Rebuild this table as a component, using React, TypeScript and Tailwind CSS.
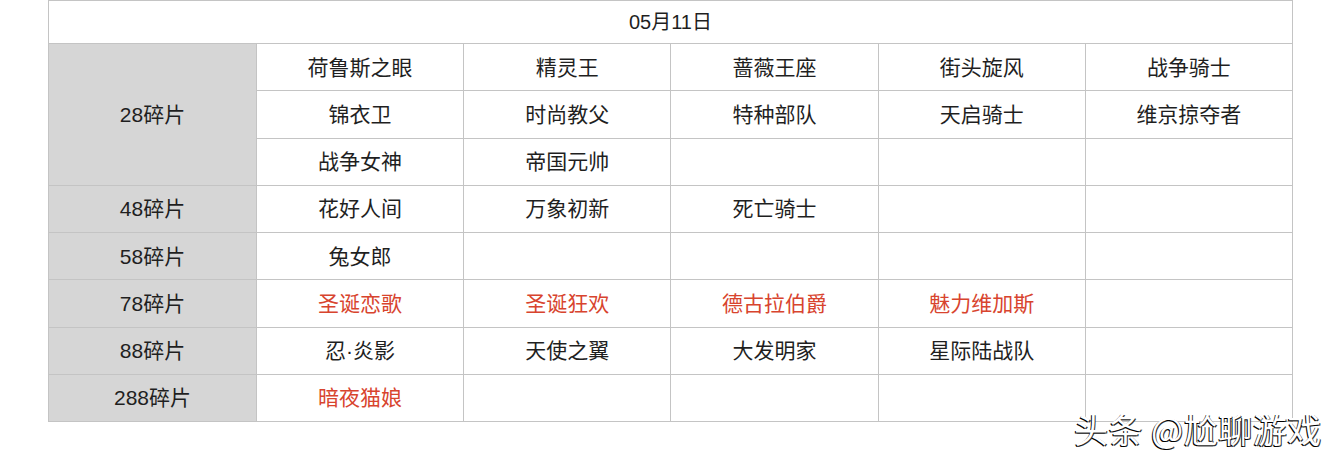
const cols = ['荷鲁斯之眼', '精灵王', '蔷薇王座', '街头旋风', '战争骑士'];

type Row = { label?: string; span?: number; items: string[]; red?: boolean };

const rows: Row[] = [
  { label: '28碎片', span: 3, items: cols },
  { items: ['锦衣卫', '时尚教父', '特种部队', '天启骑士', '维京掠夺者'] },
  { items: ['战争女神', '帝国元帅', '', '', ''] },
  { label: '48碎片', items: ['花好人间', '万象初新', '死亡骑士', '', ''] },
  { label: '58碎片', items: ['兔女郎', '', '', '', ''] },
  { label: '78碎片', items: ['圣诞恋歌', '圣诞狂欢', '德古拉伯爵', '魅力维加斯', ''], red: true },
  { label: '88碎片', items: ['忍·炎影', '天使之翼', '大发明家', '星际陆战队', ''] },
  { label: '288碎片', items: ['暗夜猫娘', '', '', '', ''] },
];

// 288碎片 only has the first one in red
const redCells: Record<string, boolean> = { 暗夜猫娘: true };

export default function App() {
  return (
    <div className="relative w-[1334px] h-[464px] bg-white font-['Liberation_Sans','Noto_Sans_CJK_SC',sans-serif] text-[#1f1f1f]">
      <div className="pl-[48px] w-[1293px]">
        <table className="w-full table-fixed border-collapse">
          <colgroup>
            <col className="w-[208px]" />
            <col />
            <col />
            <col />
            <col />
            <col />
          </colgroup>
          <tbody>
            <tr className="h-[43px]">
              <td colSpan={6} className="border border-[#c4c4c4] text-center text-[20px] leading-none">
                05月11日
              </td>
            </tr>
            {rows.map((row, i) => (
              <tr key={i} className="h-[47.25px]">
                {row.label && (
                  <td
                    rowSpan={row.span}
                    className="border border-[#c4c4c4] bg-[#d6d6d6] text-center text-[21px] leading-none"
                  >
                    {row.label}
                  </td>
                )}
                {row.items.map((name, j) => (
                  <td
                    key={j}
                    className={`border border-[#c4c4c4] text-center text-[21px] leading-none ${
                      row.red || redCells[name] ? 'text-[#d8442e]' : ''
                    }`}
                  >
                    {name}
                  </td>
                ))}
              </tr>
            ))}
          </tbody>
        </table>
      </div>

      {/* watermark */}
      <div className="absolute left-[1074px] top-[412px] text-[34px] leading-none tracking-[0.5px] text-white font-['Noto_Sans_CJK_SC',sans-serif] [text-shadow:-1px_1px_0_#000,1px_1px_0_#333]">
        头条 @尬聊游戏
      </div>
    </div>
  );
}
